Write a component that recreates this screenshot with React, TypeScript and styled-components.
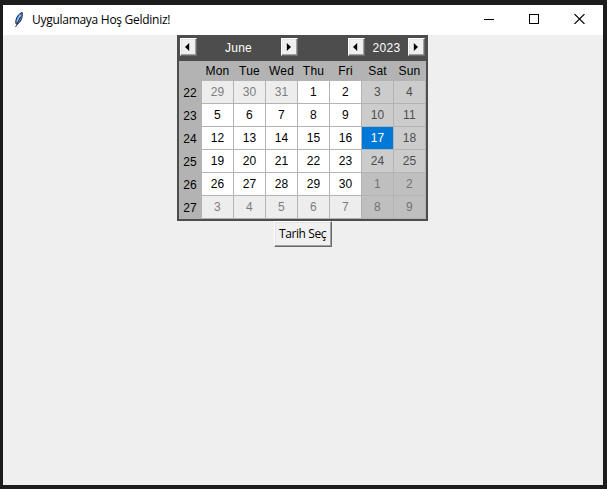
import React from "react";
import styled, { createGlobalStyle } from "styled-components";

const GlobalStyle = createGlobalStyle`
  * { box-sizing: border-box; }
  body { margin: 0; background: #1c1c1c; overflow: hidden; }
`;

const Desktop = styled.div`
  width: 607px;
  height: 489px;
  padding: 5px 4px 4px 3px;
  background: #1c1c1c;
`;

const Window = styled.div`
  display: flex;
  flex-direction: column;
  width: 600px;
  height: 480px;
  background: #efefef;
`;

const TitleBar = styled.header`
  display: flex;
  align-items: center;
  height: 30px;
  padding-left: 9px;
  background: #fff;
`;

const Title = styled.span`
  flex: 1;
  margin-left: 4px;
  font: 12px/16px "Open Sans", "Noto Sans", sans-serif;
  letter-spacing: -0.28px;
  color: #000;
`;

const WindowControls = styled.div`
  display: flex;
  gap: 35px;
  padding: 0 18px 2px 0;
`;

const Content = styled.main`
  display: flex;
  flex-direction: column;
  align-items: flex-start;
`;

const CalendarFrame = styled.section`
  width: 251px;
  height: 186px;
  margin-left: 174px;
  border: 2px solid #4d4d4d;
  border-top: 0;
  background: #b3b3b3;
  font: 12px/14px "Liberation Sans", Arial, sans-serif;
`;

const CalendarHeader = styled.div`
  display: flex;
  justify-content: space-between;
  height: 26px;
  padding: 3px 1px 0;
  background: #4d4d4d;
`;

const Stepper = styled.div<{ $width: number }>`
  display: flex;
  width: ${(p) => p.$width}px;
`;

const StepperLabel = styled.span<{ $shift?: number }>`
  flex: 1;
  padding-top: 3px;
  padding-right: ${(p) => p.$shift ?? 0}px;
  text-align: center;
  letter-spacing: 0.3px;
  color: #fff;
`;

const ArrowButton = styled.button`
  display: flex;
  align-items: center;
  justify-content: center;
  width: 17px;
  height: 18px;
  padding: 0 2px 1px 0;
  background: #f0f0f0;
  border: 1px solid;
  border-color: #fff #696969 #696969 #fff;
  box-shadow: inset -1px -1px #a0a0a0, inset 1px 1px #e6e6e6;
`;

const Grid = styled.div`
  display: grid;
  grid-template-columns: 23px repeat(7, 32px);
  grid-template-rows: 20px repeat(6, 23px);
`;

const DayName = styled.span`
  padding-top: 3px;
  padding-right: 1px;
  text-align: center;
  letter-spacing: 0.2px;
  color: #000;
`;

const WeekNumber = styled.span`
  padding-top: 5px;
  padding-right: 1px;
  text-align: center;
  letter-spacing: 0.2px;
  color: #000;
`;

type Kind = "normal" | "other" | "weekend" | "otherWeekend" | "selected";

const palette: Record<Kind, [string, string]> = {
  normal: ["#fff", "#000"],
  other: ["#ededed", "#7d7d7d"],
  weekend: ["#cccccc", "#4d4d4d"],
  otherWeekend: ["#bfbfbf", "#737373"],
  selected: ["#0078d7", "#fff"],
};

const Day = styled.span<{ $kind: Kind }>`
  padding-top: 4px;
  text-align: center;
  letter-spacing: 0.2px;
  border-right: 1px solid #b3b3b3;
  border-bottom: 1px solid #b3b3b3;
  background: ${(p) => palette[p.$kind][0]};
  color: ${(p) => palette[p.$kind][1]};
`;

const PickButton = styled.button`
  width: 58px;
  height: 26px;
  margin-left: 271px;
  padding: 0 1px 1px 0;
  background: #f0f0f0;
  border: 1px solid;
  border-color: #fff #696969 #696969 #fff;
  box-shadow: inset -1px -1px #a0a0a0, inset 1px 1px #e3e3e3;
  font: 12px/16px "Open Sans", "Noto Sans", sans-serif;
  letter-spacing: -0.4px;
  white-space: nowrap;
  color: #000;
`;

const Feather = () => (
  <svg width="16" height="18" viewBox="0 0 16 18">
    <path d="M10.2 1.5C7.2 2.3 3.4 6.5 3.8 12.2L5 13.4C8.6 11.2 10.8 7.2 10.2 1.5Z" fill="#4d8be0" stroke="#172334" strokeWidth="1" />
    <path d="M8.4 3.8 5 10.5" stroke="#a5ccff" strokeWidth="1.2" />
    <path d="M8.4 6 3.6 16" stroke="#222" strokeWidth="0.9" />
  </svg>
);

const Arrow = ({ left }: { left?: boolean }) => (
  <svg width="5" height="8" viewBox="0 0 5 8">
    <path d={left ? "M4.2 0V8L0 4Z" : "M.8 0V8L5 4Z"} fill="#000" />
  </svg>
);

const dayNames = ["Mon", "Tue", "Wed", "Thu", "Fri", "Sat", "Sun"];
const weeks = [22, 23, 24, 25, 26, 27];

const getDay = (index: number): { label: number; kind: Kind } => {
  const offset = index - 2;
  const outside = offset < 1 || offset > 30;
  const weekend = index % 7 > 4;
  const label = offset < 1 ? offset + 31 : offset > 30 ? offset - 30 : offset;
  if (offset === 17) return { label, kind: "selected" };
  if (outside) return { label, kind: weekend ? "otherWeekend" : "other" };
  return { label, kind: weekend ? "weekend" : "normal" };
};

const Calendar = () => (
  <CalendarFrame>
    <CalendarHeader>
      <Stepper $width={118}>
        <ArrowButton aria-label="Previous month"><Arrow left /></ArrowButton>
        <StepperLabel $shift={1}>June</StepperLabel>
        <ArrowButton aria-label="Next month"><Arrow /></ArrowButton>
      </Stepper>
      <Stepper $width={77}>
        <ArrowButton aria-label="Previous year"><Arrow left /></ArrowButton>
        <StepperLabel>2023</StepperLabel>
        <ArrowButton aria-label="Next year"><Arrow /></ArrowButton>
      </Stepper>
    </CalendarHeader>
    <Grid>
      <span />
      {dayNames.map((name) => <DayName key={name}>{name}</DayName>)}
      {weeks.map((week, row) => (
        <React.Fragment key={week}>
          <WeekNumber>{week}</WeekNumber>
          {dayNames.map((name, column) => {
            const { label, kind } = getDay(row * 7 + column);
            return <Day key={name} $kind={kind}>{label}</Day>;
          })}
        </React.Fragment>
      ))}
    </Grid>
  </CalendarFrame>
);

export default function App() {
  return (
    <>
      <GlobalStyle />
      <Desktop>
        <Window>
          <TitleBar>
            <Feather />
            <Title>Uygulamaya Hoş Geldiniz!</Title>
            <WindowControls>
              <svg width="10" height="10"><path d="M0 5.5H10" stroke="#000" /></svg>
              <svg width="10" height="10"><rect x=".5" y=".5" width="9" height="9" fill="none" stroke="#000" /></svg>
              <svg width="11" height="10"><path d="M.5 0 10.5 10M10.5 0 .5 10" stroke="#000" strokeWidth="1.1" /></svg>
            </WindowControls>
          </TitleBar>
          <Content>
            <Calendar />
            <PickButton>Tarih Seç</PickButton>
          </Content>
        </Window>
      </Desktop>
    </>
  );
}
